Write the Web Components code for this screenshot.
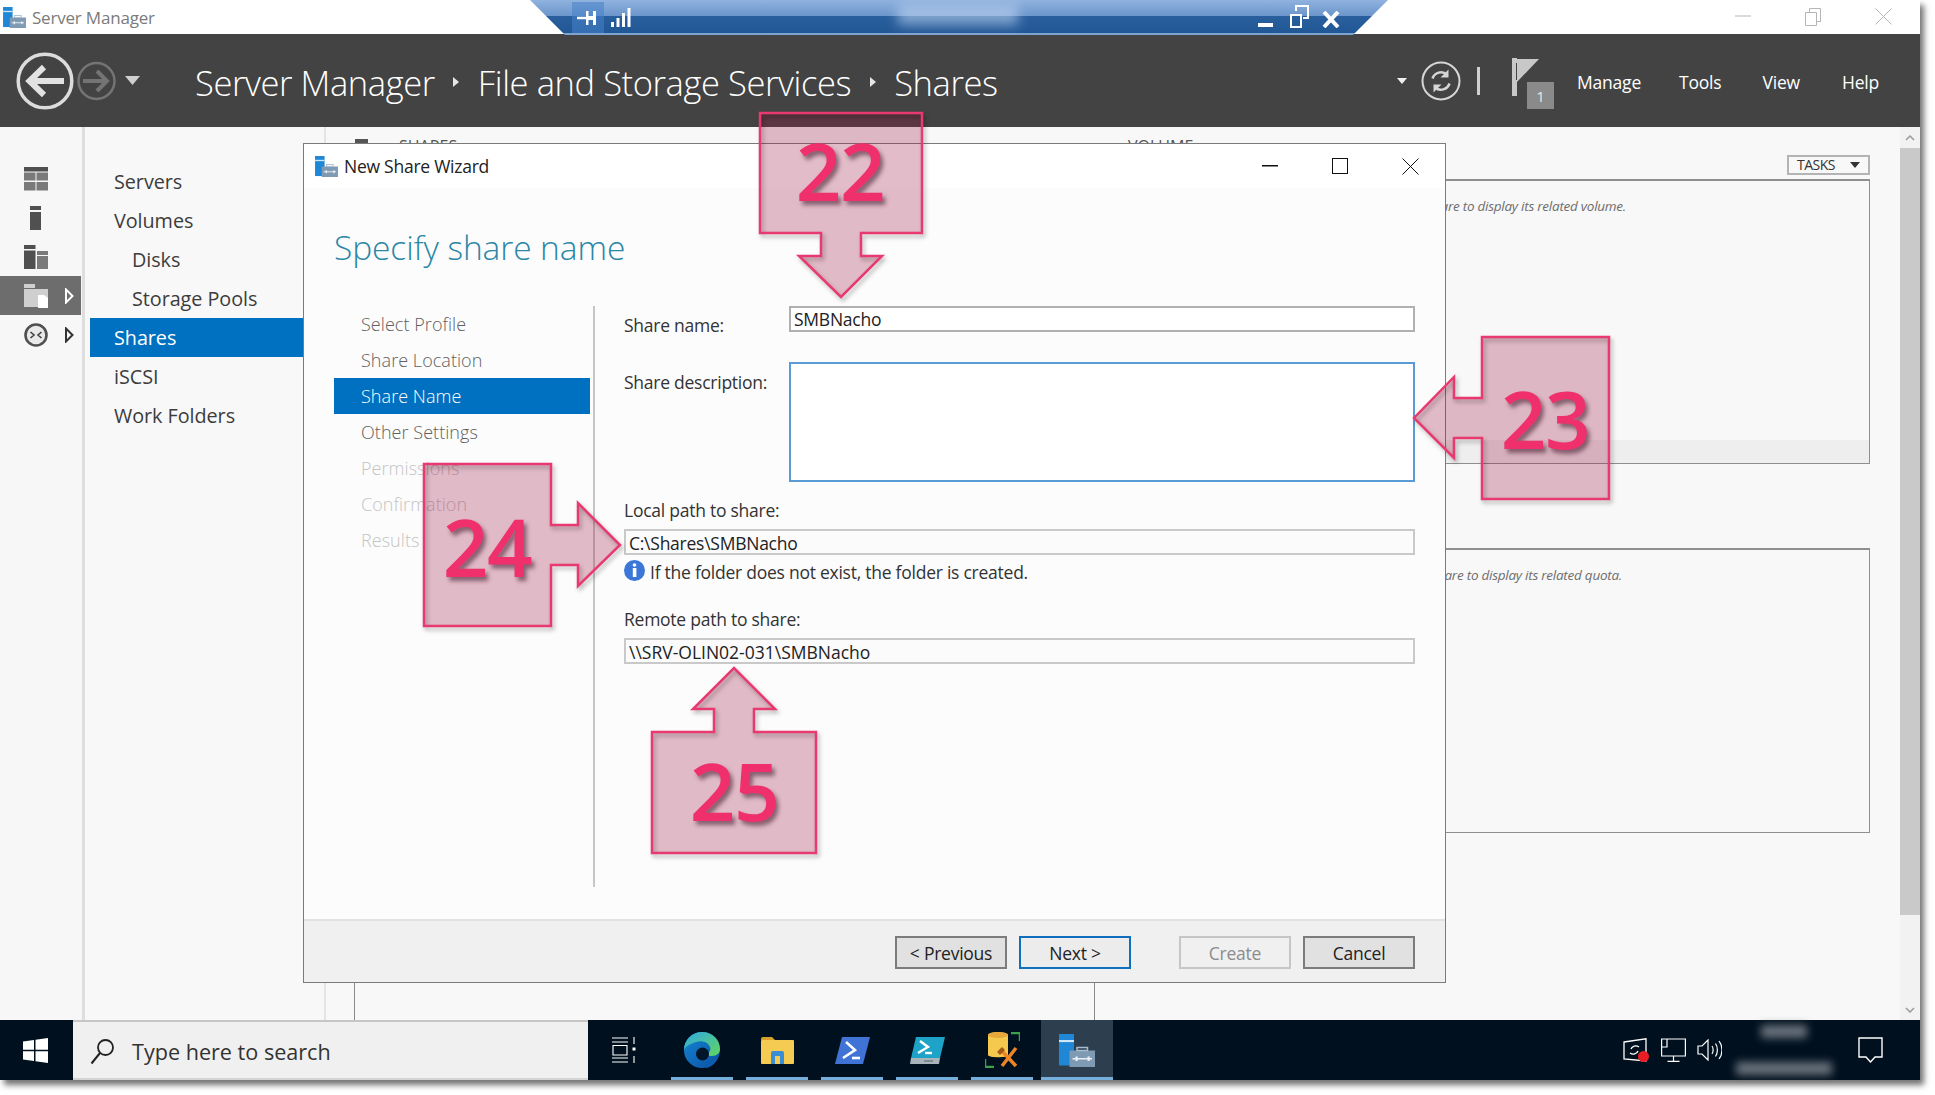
<!DOCTYPE html>
<html lang="en">
<head>
<meta charset="utf-8">
<title>Server Manager - New Share Wizard</title>
<style>
  html, body { margin: 0; padding: 0; background: #fff; }
  body {
    width: 1935px;
    height: 1095px;
    overflow: hidden;
    position: relative;
    font-family: "Open Sans", "Noto Sans", "Liberation Sans", sans-serif;
  }
</style>
</head>
<body>
<sm-window></sm-window>
<rdp-bar></rdp-bar>
<share-wizard></share-wizard>

<call-out label="22" box="760 113 162 184" num="80 57"
  points="760,113 922,113 922,233 861,233 861,256 882,256 841,297 799,256 821,256 821,233 760,233"></call-out>
<call-out label="23" box="1414 337 195 162" num="131 81"
  points="1482,337 1609,337 1609,499 1482,499 1482,438 1454,438 1454,458 1414,418 1454,377 1454,398 1482,398"></call-out>
<call-out label="24" box="424 464 196 162" num="63 82"
  points="424,464 551,464 551,525 578,525 578,503 620,545 578,586 578,565 551,565 551,626 424,626"></call-out>
<call-out label="25" box="652 668 164 185" num="82 122"
  points="652,732 714,732 714,709 693,709 734,668 775,709 754,709 754,732 816,732 816,853 652,853"></call-out>

<script>
// server manager logo, used in the title bars and on the taskbar
const logoSvg = (w, h) => `
  <svg width="${w}" height="${h}" viewBox="0 0 24 22">
    <rect x="0" y="0" width="10" height="21" fill="#1f87d6"/>
    <rect x="0" y="4" width="10" height="1.4" fill="#cfe6f7"/>
    <rect x="7" y="11" width="17" height="11" fill="#7f9ab3"/>
    <rect x="12" y="9" width="7" height="2" fill="none" stroke="#a9bccd"/>
    <path d="M9 16.5h13" stroke="#e8eef3" stroke-width="1"/>
    <rect x="11" y="15" width="1.5" height="3" fill="#e8eef3"/>
    <rect x="19" y="15" width="1.5" height="3" fill="#e8eef3"/>
  </svg>`;

/** Top title bar of the main window */
class SmTitlebar extends HTMLElement {
  connectedCallback() {
    this._root = this.attachShadow({ mode: "open" });
    this._root.innerHTML = `
      <style>
        :host { display: flex; align-items: center; height: 34px; background: #fff; color: #7b7b7b; font-size: 17px; }
        .logo { margin: 0 6px 0 3px; display: flex; }
        .title { flex: 1; letter-spacing: -0.2px; }
        .ctl { display: flex; gap: 54px; margin-right: 28px; }
        svg { display: block; }
      </style>
      <span class="logo">${logoSvg(23, 21)}</span>
      <span class="title">Server Manager</span>
      <span class="ctl">
        <svg width="16" height="16" viewBox="0 0 16 16"><path d="M0 8h16" stroke="#b5b5b5"/></svg>
        <svg width="16" height="18" viewBox="0 0 16 18"><path d="M.5 4.500h11v13H.5zM4.500 4V.5h11v13H12" fill="none" stroke="#b5b5b5"/></svg>
        <svg width="17" height="17" viewBox="0 0 17 17"><path d="M.5.500l16 16M16.500.500l-16 16" stroke="#b5b5b5"/></svg>
      </span>`;
  }
}

/** Dark header with back/forward buttons, breadcrumb and the menus */
class SmHeader extends HTMLElement {
  connectedCallback() {
    this._root = this.attachShadow({ mode: "open" });
    this._root.innerHTML = `
      <style>
        :host { display: flex; align-items: center; height: 93px; background: #434343; color: #fff; padding-left: 16px; box-sizing: border-box; }
        svg { display: block; flex: none; }
        .crumbs { display: flex; align-items: center; margin-left: 55px; flex: 1; font-size: 34.500px; font-weight: 300; letter-spacing: -0.4px; padding-top: 3px; }
        .sep { width: 0; height: 0; border-left: 6px solid #e6e6e6; border-top: 5px solid transparent; border-bottom: 5px solid transparent; margin: 0 18.500px; }
        .tools { display: flex; align-items: center; }
        .flag { position: relative; width: 42px; height: 52px; margin: 7px 0 0 32px; }
        .badge { position: absolute; left: 15px; top: 24px; width: 27px; height: 27px; background: #8a8a8a; color: #e8e8e8; font-size: 15px; display: flex; align-items: center; justify-content: center; }
        .menu { font-size: 17.500px; letter-spacing: -0.2px; padding-top: 2px; }
        .menu.first { margin-left: 23px; }
        .menu.last { margin-right: 41px; }
      </style>
      <svg width="58" height="58" viewBox="0 0 58 58">
        <circle cx="29" cy="29" r="26.800" fill="none" stroke="#dcdcdc" stroke-width="3.500"/>
        <path d="M48 29H16M28 15L13.500 29 28 43" fill="none" stroke="#e2e2e2" stroke-width="6"/>
      </svg>
      <svg style="margin-left:3px" width="39" height="40" viewBox="0 0 39 40">
        <circle cx="19.500" cy="20" r="18" fill="none" stroke="#747474" stroke-width="2.500"/>
        <path d="M6 20h24M20 10l10 10-10 10" fill="none" stroke="#747474" stroke-width="4"/>
      </svg>
      <svg style="margin-left:9px" width="15" height="9" viewBox="0 0 15 9"><path d="M0 0h15L7.500 9z" fill="#cfcfcf"/></svg>
      <div class="crumbs">
        <span>Server Manager</span><span class="sep"></span>
        <span>File and Storage Services</span><span class="sep"></span>
        <span>Shares</span>
      </div>
      <div class="tools">
        <svg width="10" height="6" viewBox="0 0 10 6"><path d="M0 0h10L5 6z" fill="#f0f0f0"/></svg>
        <svg style="margin-left:14px" width="40" height="40" viewBox="0 0 40 40">
          <circle cx="20" cy="20" r="18.500" fill="none" stroke="#d6d6d6" stroke-width="2"/>
          <path d="M11.500 17.500A9 9 0 0 1 26 13.500M28.500 22.500A9 9 0 0 1 14 26.500" fill="none" stroke="#d6d6d6" stroke-width="2.500"/>
          <path d="M27.500 8.500v8h-8zM12.500 31.500v-8h8z" fill="#d6d6d6"/>
        </svg>
        <svg style="margin-left:16px" width="3" height="28" viewBox="0 0 3 28"><rect width="3" height="28" fill="#d0d0d0"/></svg>
        <span class="flag">
          <svg width="28" height="38" viewBox="0 0 28 38">
            <rect width="5" height="38" fill="#c8c8c8"/>
            <path d="M5 1h22L5 24z" fill="#c8c8c8"/>
            <rect x="4" y="5" width="1" height="17" fill="#434343"/>
          </svg>
          <span class="badge">1</span>
        </span>
        <span class="menu first">Manage</span>
        <span class="menu" style="margin-left:38px">Tools</span>
        <span class="menu" style="margin-left:41px">View</span>
        <span class="menu last" style="margin-left:42px">Help</span>
      </div>`;
  }
}

/** Narrow column of role icons next to the page list */
class SmSidebar extends HTMLElement {
  connectedCallback() {
    this._root = this.attachShadow({ mode: "open" });
    const tri = (c) => `<svg class="tri" width="9" height="16" viewBox="0 0 9 16"><path d="M1 1.500l6.500 6.500L1 14.500z" fill="none" stroke="${c}" stroke-width="2"/></svg>`;
    this._root.innerHTML = `
      <style>
        :host { display: flex; flex-direction: column; width: 85px; box-sizing: border-box; padding-top: 32px; background: #f7f7f7; border-right: 3px solid #dedede; flex: none; }
        .row { height: 39px; width: 81px; display: flex; align-items: center; padding-left: 24px; box-sizing: border-box; position: relative; }
        .row.on { background: #6d6d6d; }
        .tri { position: absolute; left: 65px; top: 12px; }
        svg { display: block; }
      </style>
      <div class="row"><svg width="24" height="24" viewBox="0 0 24 24"><rect width="24" height="4.500" fill="#505050"/><rect y="5.500" width="11.500" height="8" fill="#7a7a7a"/><rect x="12.500" y="5.500" width="11.500" height="8" fill="#7a7a7a"/><rect y="15" width="11.500" height="8.500" fill="#7a7a7a"/><rect x="12.500" y="15" width="11.500" height="8.500" fill="#7a7a7a"/></svg></div>
      <div class="row"><svg width="24" height="24" viewBox="0 0 24 24"><rect x="6" width="11" height="4" fill="#505050"/><rect x="6" y="6" width="11" height="18" fill="#505050"/></svg></div>
      <div class="row"><svg width="24" height="24" viewBox="0 0 24 24"><rect width="11.500" height="4" fill="#505050"/><rect y="5.500" width="11.500" height="18.500" fill="#505050"/><rect x="13" y="6" width="11" height="4" fill="#7a7a7a"/><rect x="13" y="11" width="11" height="13" fill="#7a7a7a"/></svg></div>
      <div class="row on"><svg width="24" height="24" viewBox="0 0 24 24"><rect y="0" width="11" height="4" fill="#cfcfcf"/><rect y="5" width="24" height="18" fill="#cfcfcf"/><path d="M14 11h6l4 3v10H14z" fill="#fff"/></svg>${tri("#fff")}</div>
      <div class="row"><svg width="24" height="24" viewBox="0 0 24 24"><circle cx="12" cy="12" r="10.500" fill="#e9e9e9" stroke="#505050" stroke-width="2.600"/><path d="M6.500 9l3.500 3-3.500 3M17.500 9L14 12l3.500 3" fill="none" stroke="#404040" stroke-width="1.600"/></svg>${tri("#333")}</div>`;
  }
}

/** Page list: Servers, Volumes, Shares... */
class SmNav extends HTMLElement {
  connectedCallback() {
    this._root = this.attachShadow({ mode: "open" });
    const items = [
      ["Servers"], ["Volumes"], ["Disks", "sub"], ["Storage Pools", "sub"],
      ["Shares", "on"], ["iSCSI"], ["Work Folders"],
    ];
    this._root.innerHTML = `
      <style>
        :host { display: block; width: 241px; box-sizing: border-box; padding: 35px 0 0 5px; background: #f8f8f8; border-right: 2px solid #e4e4e4; flex: none; color: #3c3c3c; font-size: 19.800px; letter-spacing: -0.05px; }
        div { height: 39px; line-height: 40px; padding-left: 24px; }
        .sub { padding-left: 42px; }
        .on { background: #0070c0; color: #fff; }
      </style>
      ${items.map(([t, c]) => `<div class="${c || ""}">${t}</div>`).join("")}`;
  }
}

/** Grid and tile panels behind the wizard */
class SmContent extends HTMLElement {
  connectedCallback() {
    this._root = this.attachShadow({ mode: "open" });
    this._root.innerHTML = `
      <style>
        :host { display: flex; flex: 1; background: #f8f8f8; padding-left: 28px; color: #555; min-width: 0; }
        .left { width: 741px; flex: none; box-sizing: border-box; border-left: 1px solid #8a8a8a; border-right: 1px solid #8a8a8a; margin-top: 52px; position: relative; }
        h2 { position: absolute; left: 44px; top: -43px; margin: 0; font-size: 16px; font-weight: 400; line-height: 20px; }
        h2::before { content: ""; position: absolute; left: -44px; top: 3px; width: 13px; height: 12px; background: #555; }
        .right { width: 743px; margin-left: 32px; flex: none; }
        .head { height: 52px; display: flex; font-size: 16px; line-height: 20px; padding: 9px 0 0 1px; box-sizing: border-box; position: relative; }
        .tasks { position: absolute; right: 0; top: 28px; box-sizing: border-box; width: 83px; height: 20px; border: 2px solid #b4b4b4; background: #f8f8f8; font-size: 14px; line-height: 16px; padding-left: 8px; color: #333; letter-spacing: -0.5px; }
        .tasks::after { content: ""; position: absolute; right: 8px; top: 5px; border-top: 6px solid #333; border-left: 5px solid transparent; border-right: 5px solid transparent; }
        .panel { box-sizing: border-box; height: 285px; border: 1px solid #8f8f8f; border-top-width: 2px; position: relative; }
        .band { position: absolute; left: 0; right: 0; bottom: 0; height: 23px; background: #eeeeee; }
        .msg { text-align: right; margin-top: 15px; font-size: 13.500px; line-height: 20px; font-style: italic; color: #6d6d6d; letter-spacing: -0.25px; }
        .gap { height: 84px; }
      </style>
      <div class="left"><h2>SHARES</h2></div>
      <div class="right">
        <div class="head"><span>VOLUME</span><span class="tasks">TASKS</span></div>
        <div class="panel"><div class="msg" style="width:498px">Select a share to display its related volume.</div><div class="band"></div></div>
        <div class="gap"></div>
        <div class="panel"><div class="msg" style="width:494px">Select a share to display its related quota.</div></div>
      </div>`;
  }
}

/** Vertical scrollbar of the main window */
class SmScrollbar extends HTMLElement {
  connectedCallback() {
    this._root = this.attachShadow({ mode: "open" });
    this._root.innerHTML = `
      <style>
        :host { display: flex; flex-direction: column; width: 20px; background: #f2f2f2; flex: none; }
        .btn { height: 21px; display: flex; align-items: center; justify-content: center; flex: none; }
        .thumb { height: 767px; background: #c9c9c9; flex: none; }
        .fill { flex: 1; }
      </style>
      <div class="btn"><svg width="10" height="6" viewBox="0 0 10 6"><path d="M1 5l4-4 4 4" fill="none" stroke="#9a9a9a" stroke-width="1.500"/></svg></div>
      <div class="thumb"></div>
      <div class="fill"></div>
      <div class="btn"><svg width="10" height="6" viewBox="0 0 10 6"><path d="M1 1l4 4 4-4" fill="none" stroke="#9a9a9a" stroke-width="1.500"/></svg></div>`;
  }
}

/** Windows taskbar */
class SmTaskbar extends HTMLElement {
  connectedCallback() {
    this._root = this.attachShadow({ mode: "open" });
    this._root.innerHTML = `
      <style>
        :host { display: flex; align-items: stretch; height: 60px; background: #01101e; flex: none; }
        svg { display: block; }
        .start { width: 73px; display: flex; align-items: center; justify-content: center; flex: none; padding-right: 2px; box-sizing: border-box; }
        .search { width: 515px; flex: none; box-sizing: border-box; background: #f0f0f0; border-top: 2px solid #c6c6c6; border-bottom: 2px solid #d4d4d4; display: flex; align-items: center; padding: 2px 0 0 17px; font-size: 21.600px; color: #333; }
        .search svg { margin-right: 17px; }
        .view { width: 83px; display: flex; align-items: center; justify-content: center; flex: none; padding-right: 11px; box-sizing: border-box; }
        .app { width: 62px; margin-right: 13px; box-sizing: border-box; border-bottom: 3px solid #76aedc; display: flex; align-items: center; justify-content: center; flex: none; padding-top: 3px; }
        .app.on { width: 72px; margin: 0 0 0 -5px; background: #2d3e4e; }
        .tray { margin-left: auto; display: flex; align-items: center; }
        .tray svg { flex: none; }
        .clock { width: 96px; height: 50px; margin: 0 26px 0 14px; display: flex; flex-direction: column; align-items: center; justify-content: space-between; filter: blur(4px); }
        .clock i { display: block; height: 13px; background: #69727c; }
      </style>
      <div class="start">
        <svg width="25" height="25" viewBox="0 0 25 25"><path d="M0 3.500l11-1.500v9.800H0zM12.500 1.800L25 0v11.800H12.500zM0 13.200h11V23L0 21.500zM12.500 13.200H25V25l-12.500-1.800z" fill="#fff"/></svg>
      </div>
      <div class="search">
        <svg width="25" height="27" viewBox="0 0 25 27"><circle cx="15.500" cy="9.500" r="7.500" fill="none" stroke="#222" stroke-width="1.800"/><path d="M10 15L1.500 25.500" stroke="#222" stroke-width="2"/></svg>
        <span>Type here to search</span>
      </div>
      <div class="view">
        <svg width="24" height="26" viewBox="0 0 24 26"><g fill="none" stroke="#fff" stroke-width="1.100"><path d="M0 1h16M0 5h16M0 21h16M0 25h16M1 8.500h14v9.500H1z"/><path d="M22 0v7M22 19v7"/></g><rect x="20.500" y="10.500" width="3" height="3" fill="#fff"/></svg>
      </div>
      <div class="app">
        <svg width="38" height="38" viewBox="0 0 38 38">
          <defs>
            <linearGradient id="eg" x1="0" y1="0" x2="1" y2="1"><stop offset="0" stop-color="#2fa9e4"/><stop offset="1" stop-color="#62d65f"/></linearGradient>
            <linearGradient id="eb" x1="0" y1="0" x2="1" y2="1"><stop offset="0" stop-color="#1487d6"/><stop offset="1" stop-color="#0c4fa0"/></linearGradient>
          </defs>
          <circle cx="19" cy="19" r="18" fill="url(#eb)"/>
          <path d="M1 19C1 9 9 1 19 1c11 0 18 8 18 17 0 4-3 7-8 7-3 0-7-1-7-3 5 0 6-3 5-6-2-5-8-7-14-5C7 13 3 15 1 19z" fill="url(#eg)"/>
          <circle cx="19.500" cy="23" r="6.500" fill="#02162a"/>
          <path d="M24 33c4-1 9-3 11-8-1 6-6 11-12 12z" fill="#0d5db0"/>
        </svg>
      </div>
      <div class="app">
        <svg width="33" height="28" viewBox="0 0 33 28">
          <path d="M0 3a2 2 0 0 1 2-2h9l3 3h-14z" fill="#d9a02c"/>
          <rect y="4" width="33" height="24" rx="1" fill="#f6cb52"/>
          <path d="M10 28V17a2 2 0 0 1 2-2h9a2 2 0 0 1 2 2v11h-4v-8h-5v8z" fill="#3a8ed8"/>
        </svg>
      </div>
      <div class="app">
        <svg width="35" height="27" viewBox="0 0 35 27">
          <path d="M7 0h28l-7 27H0z" fill="#3f74d6"/>
          <path d="M11 5l9 8-12 8" fill="none" stroke="#fff" stroke-width="2.600"/>
          <path d="M17 21h8" stroke="#fff" stroke-width="2.600"/>
        </svg>
      </div>
      <div class="app">
        <svg width="35" height="27" viewBox="0 0 35 27">
          <path d="M6 0h29l-5 21H1z" fill="#1ea3c8"/>
          <path d="M1 21h29l-1 6H0z" fill="#a9b3ba"/>
          <path d="M10 4l8 6-10 6" fill="none" stroke="#fff" stroke-width="2.400"/>
          <path d="M15 16h7" stroke="#fff" stroke-width="2.400"/>
          <path d="M14 24h9" stroke="#56616a" stroke-width="1"/>
        </svg>
      </div>
      <div class="app">
        <svg width="35" height="36" viewBox="0 0 35 36">
          <path d="M3 3c0-4 20-4 20 0v20c0 3-20 3-20 0z" fill="#f4c94e"/>
          <ellipse cx="13" cy="3" rx="10" ry="3" fill="#e8a73a"/>
          <path d="M26 1h9v8M0 27v8h9" fill="none" stroke="#3da04a" stroke-width="2.500"/>
          <path d="M15 17l16 17M31 16L17 34" stroke="#ef8425" stroke-width="3.500" fill="none"/>
          <path d="M12 20l5-5 3 3-5 5z" fill="#a05c18"/>
        </svg>
      </div>
      <div class="app on">${logoSvg(36, 35)}</div>
      <div class="tray">
        <svg width="27" height="25" viewBox="0 0 27 25">
          <path d="M1 4L23 .8V23L1 21z" fill="none" stroke="#fff" stroke-width="1.300"/>
          <path d="M8 11c1-3 5-4 8-2M15 13c-1 3-5 4-8 2" fill="none" stroke="#fff" stroke-width="1.300"/>
          <circle cx="20.500" cy="18.500" r="5.500" fill="#ea1c24"/>
        </svg>
        <svg style="margin-left:11px" width="25" height="24" viewBox="0 0 25 24"><g fill="none" stroke="#fff" stroke-width="1.200"><path d="M.6 1h23.800v17H.6zM12.500 18v5M6.500 23.400h12M.6 1h5.400v8H.6"/></g></svg>
        <svg style="margin-left:11px" width="25" height="22" viewBox="0 0 25 22"><g fill="none" stroke="#fff" stroke-width="1.200"><path d="M1 7h4l6-6v20l-6-6H1zM15 7c1.500 2 1.500 6 0 8M18.500 4.500c2.500 3.500 2.500 9.500 0 13M22 2c4 5 4 13 0 18"/></g></svg>
        <div class="clock"><i style="width:46px"></i><i style="width:96px"></i></div>
        <svg style="margin-right:37px" width="25" height="26" viewBox="0 0 25 26"><path d="M1 1h23v19h-7l-4.500 5L8 20H1z" fill="none" stroke="#fff" stroke-width="1.400"/></svg>
      </div>`;
  }
}

/** Whole main window behind the dialog */
class SmWindow extends HTMLElement {
  connectedCallback() {
    this._root = this.attachShadow({ mode: "open" });
    this._root.innerHTML = `
      <style>
        :host { display: flex; flex-direction: column; width: 1920px; height: 1080px; box-shadow: 4px 5px 6px rgba(0,0,0,0.55); }
        .main { display: flex; height: 893px; flex: none; overflow: hidden; }
      </style>
      <sm-titlebar></sm-titlebar>
      <sm-header></sm-header>
      <div class="main">
        <sm-sidebar></sm-sidebar>
        <sm-nav></sm-nav>
        <sm-content></sm-content>
        <sm-scrollbar></sm-scrollbar>
      </div>
      <sm-taskbar></sm-taskbar>`;
  }
}

/** Blue remote desktop connection bar at the top */
class RdpBar extends HTMLElement {
  connectedCallback() {
    this._root = this.attachShadow({ mode: "open" });
    this._root.innerHTML = `
      <style>
        :host { position: absolute; left: 530px; top: 0; width: 858px; height: 35px; display: flex; align-items: center; box-sizing: border-box; padding: 0 48px 0 42px; color: #fff;
          background: linear-gradient(#90b2de 0, #6c96cc 45%, #2a5f9f 47%, #225795 94%, #7fa3d0 94%, #7fa3d0 100%);
          clip-path: polygon(0 0, 100% 0, calc(100% - 35px) 100%, 35px 100%); }
        .pin { width: 32px; height: 31px; background: rgba(70,130,200,0.55); display: flex; align-items: center; justify-content: center; }
        .name { position: absolute; left: 368px; top: 5px; width: 120px; height: 20px; background: rgba(200,220,245,0.55); filter: blur(6px); }
        .right { margin-left: auto; display: flex; align-items: flex-end; gap: 16px; padding-bottom: 3px; }
        svg { display: block; }
      </style>
      <div class="pin">
        <svg width="22" height="18" viewBox="0 0 22 18"><path d="M0 9h9" stroke="#fff" stroke-width="2.500"/><path d="M9 2h2.500v14H9zM16 2h3v14h-3zM11 7h5v4h-5z" fill="#fff"/></svg>
      </div>
      <svg style="margin-left:7px" width="20" height="19" viewBox="0 0 20 19"><path d="M0 14h3v5H0zM5.500 10h3v9h-3zM11 5h3v14h-3zM16.500 0h3v19h-3z" fill="#fff"/></svg>
      <div class="name"></div>
      <div class="right">
        <svg width="15" height="5" viewBox="0 0 15 5"><rect width="15" height="4" fill="#fff"/></svg>
        <svg width="20" height="23" viewBox="0 0 20 23"><path d="M2 10h10v12H2z" fill="none" stroke="#fff" stroke-width="2"/><path d="M7 6V1h12v12h-5" fill="none" stroke="#fff" stroke-width="2"/></svg>
        <svg style="margin-left:-3px" width="18" height="17" viewBox="0 0 18 17"><path d="M2 1l14 15M16 1L2 16" stroke="#fff" stroke-width="4"/></svg>
      </div>`;
  }
}

/** Wizard dialog, floats above the main window */
class ShareWizard extends HTMLElement {
  connectedCallback() {
    this._root = this.attachShadow({ mode: "open" });
    this._root.innerHTML = `
      <style>
        :host { position: absolute; left: 303px; top: 143px; width: 1143px; height: 840px; box-sizing: border-box; border: 1px solid #7b7b7b; background: #fcfcfc; display: flex; flex-direction: column; color: #333; font-size: 17.500px; letter-spacing: -0.25px; }
        svg { display: block; }
        .bar { height: 44px; flex: none; background: #fff; display: flex; align-items: center; padding-left: 11px; color: #222; }
        .bar .t { margin-left: 6px; flex: 1; }
        .ctl { display: flex; align-items: center; gap: 54px; margin-right: 26px; }
        h1 { margin: 0; height: 118px; box-sizing: border-box; flex: none; padding: 36px 0 0 30px; font-size: 33.500px; line-height: 46px; font-weight: 300; color: #2a87a6; letter-spacing: -0.1px; }
        .body { display: flex; flex: 1; min-height: 0; }
        wizard-steps { margin-left: 30px; }
        .rule { width: 2px; height: 581px; background: #c6c6c6; margin-left: 3px; flex: none; }
        .form { margin-left: 29px; width: 791px; flex: none; }
        .row { display: flex; }
        .row label { width: 165px; flex: none; }
        .lbl { height: 24px; line-height: 24px; }
        .box { box-sizing: border-box; background: #fff; border: 2px solid #b0b0b0; height: 26px; line-height: 23px; padding-left: 3px; color: #222; }
        .row .box { width: 626px; }
        .ro { border-color: #c9c9c9; background: #fbfbfb; line-height: 25px; }
        .desc { height: 120px; border-color: #5b9bd5; }
        .info { display: flex; align-items: center; height: 21px; margin-top: 5px; gap: 5px; }
        .info span { padding-top: 2px; }
        .foot { height: 63px; flex: none; box-sizing: border-box; background: #f0f0f0; border-top: 2px solid #e2e2e2; display: flex; align-items: flex-start; justify-content: flex-end; padding: 15px 30px 0 0; }
        wiz-button { margin-left: 12px; }
        wiz-button.far { margin-left: 48px; }
      </style>
      <div class="bar">
        ${logoSvg(23, 21)}
        <span class="t">New Share Wizard</span>
        <span class="ctl">
          <svg width="16" height="2" viewBox="0 0 16 2"><rect width="16" height="1.500" fill="#111"/></svg>
          <svg width="16" height="16" viewBox="0 0 16 16"><rect x=".5" y=".5" width="15" height="15" fill="none" stroke="#111"/></svg>
          <svg width="17" height="17" viewBox="0 0 17 17"><path d="M.5.500l16 16M16.500.500l-16 16" stroke="#111"/></svg>
        </span>
      </div>
      <h1>Specify share name</h1>
      <div class="body">
        <wizard-steps></wizard-steps>
        <div class="rule"></div>
        <div class="form">
          <div class="row" style="line-height:38px;height:26px"><label>Share name:</label><div class="box" style="line-height:22px">SMBNacho</div></div>
          <div class="row" style="margin-top:30px;line-height:40px"><label>Share description:</label><div class="box desc"></div></div>
          <div class="lbl" style="margin-top:16px">Local path to share:</div>
          <div class="box ro" style="margin-top:7px">C:\\Shares\\SMBNacho</div>
          <div class="info">
            <svg width="21" height="21" viewBox="0 0 21 21"><circle cx="10.500" cy="10.500" r="10.500" fill="#3a77d8"/><circle cx="10.500" cy="5" r="1.800" fill="#fff"/><rect x="8.800" y="8" width="3.600" height="9" fill="#fff"/></svg>
            <span>If the folder does not exist, the folder is created.</span>
          </div>
          <div class="lbl" style="margin-top:26px">Remote path to share:</div>
          <div class="box ro" style="margin-top:7px;letter-spacing:0">\\\\SRV-OLIN02-031\\SMBNacho</div>
        </div>
      </div>
      <div class="foot">
        <wiz-button>&lt; Previous</wiz-button>
        <wiz-button kind="default">Next &gt;</wiz-button>
        <wiz-button class="far" kind="off">Create</wiz-button>
        <wiz-button>Cancel</wiz-button>
      </div>`;
  }
}

/** Step list on the left side of the wizard */
class WizardSteps extends HTMLElement {
  connectedCallback() {
    this._root = this.attachShadow({ mode: "open" });
    const steps = [
      ["Select Profile"], ["Share Location"], ["Share Name", "on"], ["Other Settings"],
      ["Permissions", "off"], ["Confirmation", "off"], ["Results", "off"],
    ];
    this._root.innerHTML = `
      <style>
        :host { display: block; width: 256px; flex: none; color: #5f5f5f; font-weight: 300; font-size: 18px; letter-spacing: 0.05px; }
        div { height: 36px; line-height: 36px; padding-left: 27px; }
        .on { background: #0070c0; color: #fff; }
        .off { color: #c4c4c4; }
      </style>
      ${steps.map(([t, c]) => `<div class="${c || ""}">${t}</div>`).join("")}`;
  }
}

/** Button in the wizard footer, kind is "default" or "off" */
class WizButton extends HTMLElement {
  connectedCallback() {
    this._root = this.attachShadow({ mode: "open" });
    const kind = this.getAttribute("kind") || "";
    this._root.innerHTML = `
      <style>
        :host { display: block; }
        div { box-sizing: border-box; width: 112px; height: 33px; border: 2px solid #7c7c7c; background: #e1e1e1; color: #222; display: flex; align-items: center; justify-content: center; }
        .default { border-color: #0f6fbe; background: #ececec; }
        .off { border-color: #c6c6c6; background: #f0f0f0; color: #8c8c8c; }
      </style>
      <div class="${kind}"><slot></slot></div>`;
  }
}

/** Numbered pink arrow drawn over the screenshot */
class CallOut extends HTMLElement {
  connectedCallback() {
    this._root = this.attachShadow({ mode: "open" });
    const [x, y, w, h] = this.getAttribute("box").split(" ").map(Number);
    const [nx, ny] = this.getAttribute("num").split(" ").map(Number);
    const points = this.getAttribute("points");
    this._root.innerHTML = `
      <style>
        :host { position: absolute; left: ${x}px; top: ${y}px; width: ${w}px; height: ${h}px; display: block; }
        svg { display: block; overflow: visible; }
        .edge { filter: drop-shadow(2px 3px 2px rgba(0,0,0,0.3)); }
        span { position: absolute; left: ${nx}px; top: ${ny}px; transform: translate(-50%, -50%); font-size: 80px; line-height: 80px; font-weight: 600; color: #f0306c; letter-spacing: -1.500px; text-shadow: 3px 4px 4px rgba(60,20,40,0.55); }
      </style>
      <svg width="${w}" height="${h}" viewBox="${x} ${y} ${w} ${h}">
        <polygon points="${points}" fill="rgba(160,24,69,0.29)"/>
        <polygon class="edge" points="${points}" fill="none" stroke="#e83a70" stroke-width="2.500"/>
      </svg>
      <span>${this.getAttribute("label")}</span>`;
  }
}

customElements.define("sm-titlebar", SmTitlebar);
customElements.define("sm-header", SmHeader);
customElements.define("sm-sidebar", SmSidebar);
customElements.define("sm-nav", SmNav);
customElements.define("sm-content", SmContent);
customElements.define("sm-scrollbar", SmScrollbar);
customElements.define("sm-taskbar", SmTaskbar);
customElements.define("sm-window", SmWindow);
customElements.define("rdp-bar", RdpBar);
customElements.define("share-wizard", ShareWizard);
customElements.define("wizard-steps", WizardSteps);
customElements.define("wiz-button", WizButton);
customElements.define("call-out", CallOut);
</script>
</body>
</html>
